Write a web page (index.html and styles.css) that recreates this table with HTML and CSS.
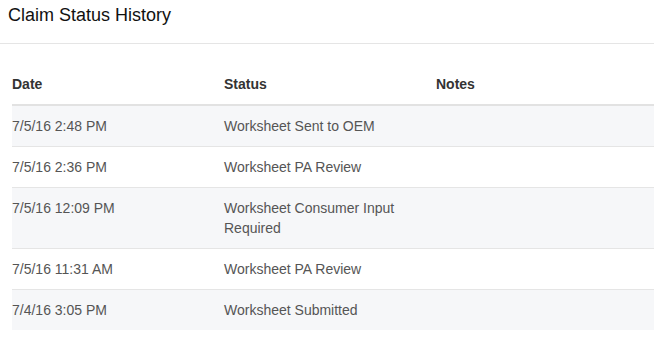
FILE: index.html
```html
<!DOCTYPE html>
<html lang="en">
  <head>
    <meta charset="UTF-8" />
    <meta name="viewport" content="width=device-width, initial-scale=1.0" />
    <title>Claim Status History</title>
    <link rel="stylesheet" href="styles.css">
  </head>
  <body>
    <div class="history-panel">
      <div class="panel-header">
        <h4 class="panel-title">Claim Status History</h4>
      </div>
      <div class="panel-body">
        <table class="history-table">
          <colgroup>
            <col class="col-date" />
            <col class="col-status" />
            <col />
          </colgroup>
          <thead>
            <tr>
              <th>Date</th>
              <th>Status</th>
              <th>Notes</th>
            </tr>
          </thead>
          <tbody>
            <tr>
              <td>7/5/16 2:48 PM</td>
              <td>Worksheet Sent to OEM</td>
              <td></td>
            </tr>
            <tr>
              <td>7/5/16 2:36 PM</td>
              <td>Worksheet PA Review</td>
              <td></td>
            </tr>
            <tr>
              <td>7/5/16 12:09 PM</td>
              <td>Worksheet Consumer Input Required</td>
              <td></td>
            </tr>
            <tr>
              <td>7/5/16 11:31 AM</td>
              <td>Worksheet PA Review</td>
              <td></td>
            </tr>
            <tr>
              <td>7/4/16 3:05 PM</td>
              <td>Worksheet Submitted</td>
              <td></td>
            </tr>
          </tbody>
        </table>
      </div>
    </div>
  </body>
</html>
```

FILE: styles.css
```css
body {
  font-family: "Liberation Sans", Arial, sans-serif;
  font-size: 14px;
  line-height: 20px;
  color: #555;
  background-color: #fff;
  margin: 0;
}

.panel-header {
  padding: 4px 8px 17px;
  border-bottom: 1px solid #e5e5e5;
}

.panel-title {
  margin: 0;
  font-size: 18px;
  font-weight: normal;
  line-height: 22px;
  color: #111;
}

.panel-body {
  padding: 20px 0 0 12px;
}

.history-table {
  width: 100%;
  border-collapse: collapse;
  table-layout: fixed;
}

.col-date,
.col-status {
  width: 212px;
}

.history-table th,
.history-table td {
  padding: 10px 0;
  text-align: left;
  vertical-align: top;
}

.history-table th {
  color: #333;
  font-weight: bold;
  border-bottom: 2px solid #e2e2e2;
}

.history-table td {
  border-top: 1px solid #e5e5e5;
}

.history-table td:last-child {
  padding-right: 12px;
}

.history-table tbody tr:first-child td {
  border-top: 0;
}

.history-table tbody tr:nth-child(odd) {
  background-color: #f6f7f9;
}

.history-table td:nth-child(2) {
  padding-right: 14px;
}
```
